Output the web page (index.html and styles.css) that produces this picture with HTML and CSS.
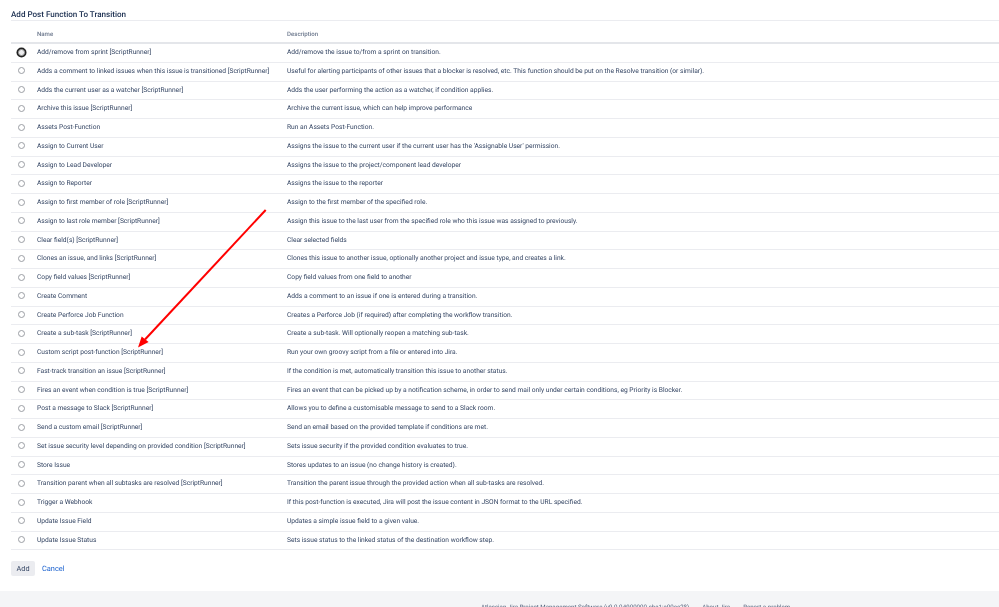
FILE: index.html
```html
<!DOCTYPE html>
<html lang="en">
<head>
<meta charset="utf-8">
<title>Add Post Function To Transition</title>
<link rel="stylesheet" href="styles.css">
</head>
<body>
<main class="page">
  <h2 class="title">Add Post Function To Transition</h2>
  <div class="list">
    <div class="row head"><span class="pick"></span><span class="name">Name</span><span class="desc">Description</span></div>
    <div class="row"><span class="pick"><i class="radio focus"></i></span><span class="name">Add/remove from sprint [ScriptRunner]</span><span class="desc">Add/remove the issue to/from a sprint on transition.</span></div>
    <div class="row"><span class="pick"><i class="radio"></i></span><span class="name">Adds a comment to linked issues when this issue is transitioned [ScriptRunner]</span><span class="desc">Useful for alerting participants of other issues that a blocker is resolved, etc. This function should be put on the Resolve transition (or similar).</span></div>
    <div class="row"><span class="pick"><i class="radio"></i></span><span class="name">Adds the current user as a watcher [ScriptRunner]</span><span class="desc">Adds the user performing the action as a watcher, if condition applies.</span></div>
    <div class="row"><span class="pick"><i class="radio"></i></span><span class="name">Archive this issue [ScriptRunner]</span><span class="desc">Archive the current issue, which can help improve performance</span></div>
    <div class="row"><span class="pick"><i class="radio"></i></span><span class="name">Assets Post-Function</span><span class="desc">Run an Assets Post-Function.</span></div>
    <div class="row"><span class="pick"><i class="radio"></i></span><span class="name">Assign to Current User</span><span class="desc">Assigns the issue to the current user if the current user has the 'Assignable User' permission.</span></div>
    <div class="row"><span class="pick"><i class="radio"></i></span><span class="name">Assign to Lead Developer</span><span class="desc">Assigns the issue to the project/component lead developer</span></div>
    <div class="row"><span class="pick"><i class="radio"></i></span><span class="name">Assign to Reporter</span><span class="desc">Assigns the issue to the reporter</span></div>
    <div class="row"><span class="pick"><i class="radio"></i></span><span class="name">Assign to first member of role [ScriptRunner]</span><span class="desc">Assign to the first member of the specified role.</span></div>
    <div class="row"><span class="pick"><i class="radio"></i></span><span class="name">Assign to last role member [ScriptRunner]</span><span class="desc">Assign this issue to the last user from the specified role who this issue was assigned to previously.</span></div>
    <div class="row"><span class="pick"><i class="radio"></i></span><span class="name">Clear field(s) [ScriptRunner]</span><span class="desc">Clear selected fields</span></div>
    <div class="row"><span class="pick"><i class="radio"></i></span><span class="name">Clones an issue, and links [ScriptRunner]</span><span class="desc">Clones this issue to another issue, optionally another project and issue type, and creates a link.</span></div>
    <div class="row"><span class="pick"><i class="radio"></i></span><span class="name">Copy field values [ScriptRunner]</span><span class="desc">Copy field values from one field to another</span></div>
    <div class="row"><span class="pick"><i class="radio"></i></span><span class="name">Create Comment</span><span class="desc">Adds a comment to an issue if one is entered during a transition.</span></div>
    <div class="row"><span class="pick"><i class="radio"></i></span><span class="name">Create Perforce Job Function</span><span class="desc">Creates a Perforce Job (if required) after completing the workflow transition.</span></div>
    <div class="row"><span class="pick"><i class="radio"></i></span><span class="name">Create a sub-task [ScriptRunner]</span><span class="desc">Create a sub-task. Will optionally reopen a matching sub-task.</span></div>
    <div class="row"><span class="pick"><i class="radio"></i></span><span class="name">Custom script post-function [ScriptRunner]</span><span class="desc">Run your own groovy script from a file or entered into Jira.</span></div>
    <div class="row"><span class="pick"><i class="radio"></i></span><span class="name">Fast-track transition an issue [ScriptRunner]</span><span class="desc">If the condition is met, automatically transition this issue to another status.</span></div>
    <div class="row"><span class="pick"><i class="radio"></i></span><span class="name">Fires an event when condition is true [ScriptRunner]</span><span class="desc">Fires an event that can be picked up by a notification scheme, in order to send mail only under certain conditions, eg Priority is Blocker.</span></div>
    <div class="row"><span class="pick"><i class="radio"></i></span><span class="name">Post a message to Slack [ScriptRunner]</span><span class="desc">Allows you to define a customisable message to send to a Slack room.</span></div>
    <div class="row"><span class="pick"><i class="radio"></i></span><span class="name">Send a custom email [ScriptRunner]</span><span class="desc">Send an email based on the provided template if conditions are met.</span></div>
    <div class="row"><span class="pick"><i class="radio"></i></span><span class="name">Set issue security level depending on provided condition [ScriptRunner]</span><span class="desc">Sets issue security if the provided condition evaluates to true.</span></div>
    <div class="row"><span class="pick"><i class="radio"></i></span><span class="name">Store Issue</span><span class="desc">Stores updates to an issue (no change history is created).</span></div>
    <div class="row"><span class="pick"><i class="radio"></i></span><span class="name">Transition parent when all subtasks are resolved [ScriptRunner]</span><span class="desc">Transition the parent issue through the provided action when all sub-tasks are resolved.</span></div>
    <div class="row"><span class="pick"><i class="radio"></i></span><span class="name">Trigger a Webhook</span><span class="desc">If this post-function is executed, Jira will post the issue content in JSON format to the URL specified.</span></div>
    <div class="row"><span class="pick"><i class="radio"></i></span><span class="name">Update Issue Field</span><span class="desc">Updates a simple issue field to a given value.</span></div>
    <div class="row"><span class="pick"><i class="radio"></i></span><span class="name">Update Issue Status</span><span class="desc">Sets issue status to the linked status of the destination workflow step.</span></div>
  </div>
  <div class="actions">
    <button class="add" type="button">Add</button>
    <a class="cancel" href="#">Cancel</a>
  </div>
</main>
<footer class="footer">
  <span>Atlassian Jira Project Management Software (v9.0.0#900000-sha1:a00ee28)</span>
  <span>About Jira</span>
  <span>Report a problem</span>
</footer>
<svg class="arrow" width="999" height="607" viewBox="0 0 999 607" aria-hidden="true">
  <line x1="265.7" y1="210" x2="145" y2="339.5" stroke="#ff0000" stroke-width="2"/>
  <polygon points="138,347.5 141.7,336.5 148.6,342" fill="#ff0000"/>
</svg>
</body>
</html>
```
FILE: styles.css
```css
* { box-sizing: border-box; }
html, body { margin: 0; height: 607px; overflow: hidden; background: #fff; }
body { position: relative; font-family: Roboto, "Liberation Sans", sans-serif; color: #344563; font-size: 6.67px; text-rendering: geometricPrecision; }
.page { padding: 9px 0 0 11px; will-change: transform; }
.title { margin: 0; height: 11px; line-height: 11px; font-size: 8.07px; font-weight: 500; color: #172b4d; }
.list { border-top: 1px solid #ebecf0; }
.row { display: flex; align-items: center; height: 18.75px; padding-bottom: 1.5px; border-bottom: 1px solid #ebecf0; }
.head { height: 23px; padding: 5.5px 0 0; border-bottom: 2px solid #e4e6ea; font-size: 6.1px; font-weight: 500; color: #6b778c; }
.pick { flex: 0 0 26px; display: flex; padding-left: 7px; }
.name { flex: 0 0 250px; white-space: nowrap; }
.desc { flex: 1; white-space: nowrap; }
.radio { display: block; width: 7px; height: 7px; border-radius: 50%; border: 1px solid #9a9da3; background: #fff; }
.radio.focus { border-color: #999; background: #ececee; box-shadow: 0 0 0 1.5px #222; }
.actions { display: flex; align-items: center; gap: 7px; margin-top: 11px; }
.add { width: 24px; height: 15px; padding: 0; border: 0; border-radius: 2px; background: #ebecf0; color: #344563; font: 7.3px Roboto, "Liberation Sans", sans-serif; }
.cancel { color: #1d63cf; text-decoration: none; font-size: 7.4px; }
.footer { position: absolute; left: 0; right: 0; top: 591px; height: 16px; background: #f4f5f7; padding: 13px 0 0 481px; display: flex; gap: 13px; font-size: 6.13px; color: #505f79; white-space: nowrap; will-change: transform; }
.arrow { position: absolute; left: 0; top: 0; pointer-events: none; }
```
